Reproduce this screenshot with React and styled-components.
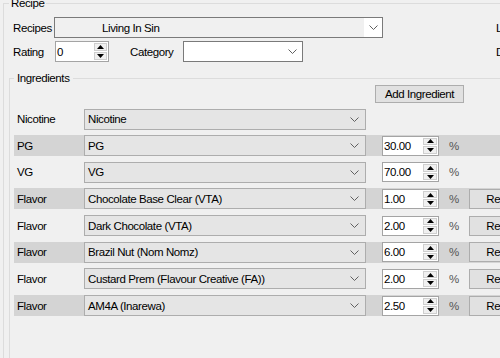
import React from "react";
import styled, { createGlobalStyle } from "styled-components";

const GlobalStyle = createGlobalStyle`
  html, body {
    margin: 0;
    padding: 0;
    background: #f0f0f0;
  }
  body {
    font-family: "Liberation Sans", Arial, sans-serif;
    font-size: 11.5px;
    letter-spacing: -0.4px;
    color: #000;
  }
`;

const Window = styled.div`
  width: 500px;
  height: 358px;
  overflow: hidden;
  background: #f0f0f0;
`;

const GroupBox = styled.fieldset`
  box-sizing: border-box;
  width: 600px;
  min-width: 0;
  border: 1px solid #dcdcdc;
  border-radius: 0;
`;

const Legend = styled.legend`
  padding: 0 ${(p) => p.$pad || 2}px;
  line-height: 13px;
`;

const RecipeGroup = styled(GroupBox)`
  margin: -3.5px 0 0 3px;
  padding: 7.5px 0 0 5px;
  height: 420px;
`;

const IngredientsGroup = styled(GroupBox)`
  margin: 9.5px 0 0 0;
  padding: 0 0 0 4px;
  height: 400px;
`;

const FormRow = styled.div`
  display: flex;
  align-items: center;
  height: 21px;
  padding-left: 4px;
  margin-top: ${(p) => p.$gap || 0}px;
`;

const FieldLabel = styled.span`
  width: ${(p) => p.$w}px;
  margin-left: ${(p) => p.$ml || 0}px;
  flex: none;
  white-space: nowrap;
`;

const Combo = styled.div`
  box-sizing: border-box;
  flex: none;
  display: flex;
  align-items: stretch;
  width: ${(p) => p.$w}px;
  height: 21px;
  border: 1px solid ${(p) => p.$border || "#adadad"};
  background: ${(p) => p.$bg || "#e5e5e5"};
`;

const ComboText = styled.span`
  flex: 1;
  display: flex;
  align-items: center;
  padding-left: ${(p) => p.$pl || 3}px;
  white-space: nowrap;
  overflow: hidden;
`;

const ArrowBox = styled.span`
  width: ${(p) => p.$w || 17}px;
  display: flex;
  align-items: center;
  justify-content: center;
  background: ${(p) => p.$bg || "transparent"};
`;

const NumField = styled.div`
  box-sizing: border-box;
  flex: none;
  display: flex;
  width: ${(p) => p.$w}px;
  height: ${(p) => p.$h || 20}px;
  margin-left: ${(p) => p.$ml || 0}px;
  border: 1px solid #a4a4a4;
  background: #fff;
`;

const NumText = styled.span`
  flex: 1;
  display: flex;
  align-items: center;
  padding-left: 1px;
`;

const Spinner = styled.span`
  width: ${(p) => p.$w || 16}px;
  display: flex;
  flex-direction: column;
  padding: 1px;
  box-sizing: border-box;
  gap: 1px;
`;

const SpinButton = styled.span`
  flex: 1;
  display: flex;
  align-items: center;
  justify-content: center;
  background: #f0f0f0;
  border: 1px solid #cfcfcf;
`;

const SideLabel = styled.span`
  margin-left: ${(p) => p.$ml}px;
  flex: none;
`;

const ButtonBar = styled.div`
  display: flex;
  padding-left: 361px;
  height: 18px;
`;

const PushButton = styled.button`
  box-sizing: border-box;
  flex: none;
  width: ${(p) => p.$w}px;
  height: ${(p) => p.$h || 20}px;
  margin-left: ${(p) => p.$ml || 0}px;
  padding: 0;
  border: 1px solid #adadad;
  background: #e1e1e1;
  font: inherit;
  letter-spacing: inherit;
  color: #000;
  text-align: center;
`;

const IngredientList = styled.div`
  display: flex;
  flex-direction: column;
  gap: 5.67px;
  margin-top: 6px;
`;

const IngredientRow = styled.div`
  display: flex;
  align-items: center;
  width: 560px;
  height: 21px;
  background: ${(p) => (p.$band ? "#d4d4d4" : "transparent")};
`;

const TypeLabel = styled.span`
  box-sizing: border-box;
  width: 70px;
  padding-left: 3px;
  flex: none;
`;

const Percent = styled.span`
  width: 20px;
  margin-left: 10px;
  flex: none;
  color: #555;
`;

function Chevron() {
  return (
    <svg width="9" height="5" viewBox="0 0 9 5">
      <path d="M0.5 0.5 L4.5 4.5 L8.5 0.5" fill="none" stroke="#606060" strokeWidth="1" />
    </svg>
  );
}

function Triangle({ down }) {
  return (
    <svg width="7" height="4" viewBox="0 0 7 4">
      <polygon points={down ? "0,0 7,0 3.5,4" : "0,4 7,4 3.5,0"} fill="#000" />
    </svg>
  );
}

function Numeric({ value, w, h, ml, spin }) {
  return (
    <NumField $w={w} $h={h} $ml={ml}>
      <NumText>{value}</NumText>
      <Spinner $w={spin}>
        <SpinButton>
          <Triangle />
        </SpinButton>
        <SpinButton>
          <Triangle down />
        </SpinButton>
      </Spinner>
    </NumField>
  );
}

const ingredients = [
  { type: "Nicotine", name: "Nicotine" },
  { type: "PG", name: "PG", pct: "30.00" },
  { type: "VG", name: "VG", pct: "70.00" },
  { type: "Flavor", name: "Chocolate Base Clear (VTA)", pct: "1.00", removable: true },
  { type: "Flavor", name: "Dark Chocolate (VTA)", pct: "2.00", removable: true },
  { type: "Flavor", name: "Brazil Nut (Nom Nomz)", pct: "6.00", removable: true },
  { type: "Flavor", name: "Custard Prem (Flavour Creative (FA))", pct: "2.00", removable: true },
  { type: "Flavor", name: "AM4A (Inarewa)", pct: "2.50", removable: true },
];

export default function App() {
  return (
    <Window>
      <GlobalStyle />
      <RecipeGroup>
        <Legend>Recipe</Legend>
        <FormRow>
          <FieldLabel $w={41}>Recipes</FieldLabel>
          <Combo $w={329} $bg="#f0f0f0" $border="#7a7a7a">
            <ComboText $pl={47}>Living In Sin</ComboText>
            <ArrowBox $w={18} $bg="#fff">
              <Chevron />
            </ArrowBox>
          </Combo>
          <SideLabel $ml={113}>L</SideLabel>
        </FormRow>
        <FormRow $gap={3}>
          <FieldLabel $w={42}>Rating</FieldLabel>
          <Numeric value="0" w={54} h={21} spin={15} />
          <FieldLabel $w={53} $ml={21}>Category</FieldLabel>
          <Combo $w={120} $bg="#fff" $border="#7a7a7a">
            <ComboText />
            <ArrowBox $w={20}>
              <Chevron />
            </ArrowBox>
          </Combo>
          <SideLabel $ml={193}>D</SideLabel>
        </FormRow>

        <IngredientsGroup>
          <Legend $pad={3}>Ingredients</Legend>
          <ButtonBar>
            <PushButton $w={89} $h={18}>Add Ingredient</PushButton>
          </ButtonBar>
          <IngredientList>
            {ingredients.map((item, i) => (
              <IngredientRow key={i} $band={i % 2 === 1}>
                <TypeLabel>{item.type}</TypeLabel>
                <Combo $w={282}>
                  <ComboText>{item.name}</ComboText>
                  <ArrowBox $w={22}>
                    <Chevron />
                  </ArrowBox>
                </Combo>
                {item.pct && <Numeric value={item.pct} w={57} ml={16} />}
                {item.pct && <Percent>%</Percent>}
                {item.removable && <PushButton $w={75}>Remove</PushButton>}
              </IngredientRow>
            ))}
          </IngredientList>
        </IngredientsGroup>
      </RecipeGroup>
    </Window>
  );
}
